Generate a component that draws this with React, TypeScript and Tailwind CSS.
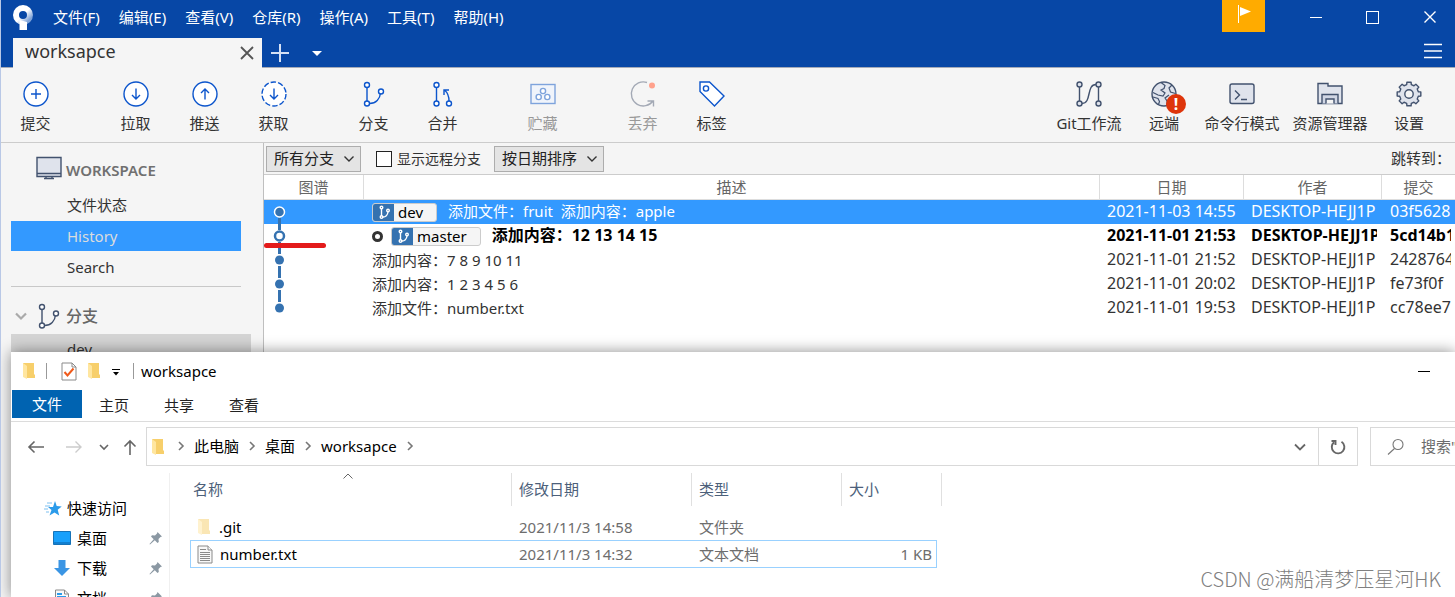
import type { ReactNode } from "react";

const menus = ["文件(F)", "编辑(E)", "查看(V)", "仓库(R)", "操作(A)", "工具(T)", "帮助(H)"];

const commits = [
  { message: "添加文件：fruit  添加内容：apple", branch: "dev", date: "2021-11-03 14:55", hash: "03f5628" },
  { message: "添加内容：12 13 14 15", branch: "master", date: "2021-11-01 21:53", hash: "5cd14b1" },
  { message: "添加内容：7 8 9 10 11", date: "2021-11-01 21:52", hash: "2428764" },
  { message: "添加内容：1 2 3 4 5 6", date: "2021-11-01 20:02", hash: "fe73f0f" },
  { message: "添加文件：number.txt", date: "2021-11-01 19:53", hash: "cc78ee7" },
];

function Icon({ size = 28, className = "", children }: { size?: number; className?: string; children: ReactNode }) {
  return (
    <svg
      width={size}
      height={size}
      viewBox={`0 0 ${size} ${size}`}
      fill="none"
      stroke="currentColor"
      strokeWidth="1.4"
      className={`shrink-0 ${className}`}
      aria-hidden="true"
    >
      {children}
    </svg>
  );
}

function Arrow({ up = false, dashed = false }: { up?: boolean; dashed?: boolean }) {
  return (
    <Icon>
      <circle cx="14" cy="14" r="12" fill="#fff" strokeDasharray={dashed ? "5.5 2.04" : undefined} />
      {up ? <path d="M14 19.5V9M10 13l4-4 4 4" /> : <path d="M14 8.500V19M10 15l4 4 4-4" />}
    </Icon>
  );
}

function BranchIcon({ className = "" }: { className?: string }) {
  return (
    <Icon className={className}>
      <path d="M7 7.500V21M9.500 23.500C16 23.500 20 19 20.500 13" />
      <circle cx="7" cy="5" r="2.500" fill="#fff" />
      <circle cx="7" cy="23.500" r="2.500" fill="#fff" />
      <circle cx="21" cy="11.500" r="2.500" fill="#fff" />
    </Icon>
  );
}

// eight teeth, each one a short outer flat joined to the next by an inner flat
function GearIcon() {
  const points: string[] = [];
  for (let i = 0; i < 8; i++) {
    for (const [offset, r] of [[-14, 9.6], [-10, 12], [10, 12], [14, 9.6]]) {
      const a = ((i * 45 + offset) * Math.PI) / 180;
      points.push(`${(14 + r * Math.sin(a)).toFixed(2)},${(14 - r * Math.cos(a)).toFixed(2)}`);
    }
  }
  return (
    <Icon>
      <polygon points={points.join(" ")} fill="#dfe3ec" strokeLinejoin="round" />
      <circle cx="14" cy="14" r="4.200" fill="#f5f5f5" />
    </Icon>
  );
}

const actions = [
  {
    label: "提交",
    icon: (
      <Icon>
        <circle cx="14" cy="14" r="12" fill="#fff" />
        <path d="M14 9v10M9 14h10" />
      </Icon>
    ),
  },
  { label: "拉取", gap: true, icon: <Arrow /> },
  { label: "推送", icon: <Arrow up /> },
  { label: "获取", icon: <Arrow dashed /> },
  { label: "分支", gap: true, icon: <BranchIcon /> },
  {
    label: "合并",
    icon: (
      <Icon>
        <path d="M7.500 7.500V21M20 21c0-5-1-8-4.500-11M15 15V10h5" />
        <circle cx="7.500" cy="5" r="2.500" fill="#fff" />
        <circle cx="7.500" cy="23.500" r="2.500" fill="#fff" />
        <circle cx="20" cy="23.500" r="2.500" fill="#fff" />
      </Icon>
    ),
  },
  {
    label: "贮藏",
    gap: true,
    disabled: true,
    icon: (
      <Icon className="text-[#7ea3dc]">
        <rect x="2" y="4.500" width="24" height="19" fill="#f0f4fb" />
        <circle cx="14" cy="11" r="2.600" fill="#fff" />
        <circle cx="9.700" cy="17" r="2.600" fill="#fff" />
        <circle cx="18.300" cy="17" r="2.600" fill="#fff" />
      </Icon>
    ),
  },
  {
    label: "丢弃",
    gap: true,
    disabled: true,
    icon: (
      <Icon className="text-[#a3a9b5]">
        <path d="M18 2.500A12 12 0 1 0 24 21M18.500 21H24.500V26.500" />
        <circle cx="23" cy="5.500" r="3" fill="#ffa18c" stroke="none" />
      </Icon>
    ),
  },
  {
    label: "标签",
    icon: (
      <Icon>
        <path d="M2 2h9.500L26 16 16.500 26 2 11.500z" fill="#fff" />
        <circle cx="8" cy="8.500" r="2.600" />
      </Icon>
    ),
  },
];

const tools = [
  {
    label: "Git工作流",
    width: "w-[92px]",
    icon: (
      <Icon>
        <path d="M4.500 7v14M23.500 7v14M7 23.500C17 23.500 11 4.500 21 4.500" />
        <circle cx="4.500" cy="4.500" r="2.500" fill="#dfe3ec" />
        <circle cx="4.500" cy="23.500" r="2.500" fill="#dfe3ec" />
        <circle cx="23.500" cy="4.500" r="2.500" fill="#dfe3ec" />
        <circle cx="23.500" cy="23.500" r="2.500" fill="#dfe3ec" />
      </Icon>
    ),
  },
  {
    label: "远端",
    width: "w-[58px]",
    alert: true,
    icon: (
      <Icon>
        <circle cx="14" cy="14" r="12" fill="#dfe3ec" />
        <path d="M11 2.500l4 3-1 3-3 1.500 4 3-2 3-5-1-5-2.500M3 17l5 1.500 1.500 3-1 3M22 5l-3 3 1.500 4 5 1.500M17 26v-5l-2-3 4-3" strokeWidth="1.200" />
      </Icon>
    ),
  },
  {
    label: "命令行模式",
    width: "w-[98px]",
    icon: (
      <Icon>
        <rect x="2" y="4" width="24" height="19.500" rx="2" fill="#dfe3ec" />
        <path d="M7 10.500l4.500 4.500L7 19.500M13 19.500h6" />
      </Icon>
    ),
  },
  {
    label: "资源管理器",
    width: "w-[78px]",
    icon: (
      <Icon>
        <path d="M2 3.500h10v2.500h14v17.500H2z" fill="#dfe3ec" />
        <path d="M6 23.500V14.500h16v9" fill="#d0d6e4" />
        <path d="M10 23.500V19h8v4.500" fill="#f5f5f5" />
      </Icon>
    ),
  },
  { label: "设置", width: "w-[80px]", icon: <GearIcon /> },
];

function Chevron({ className = "" }: { className?: string }) {
  return (
    <Icon size={12} className={className}>
      <path d="M1.500 3.500L6 8l4.500-4.500" />
    </Icon>
  );
}

function Dropdown({ label, width, options }: { label: string; width: string; options: string[] }) {
  return (
    <div className={`relative ${width}`}>
      <select
        aria-label={label}
        className="w-full h-[26px] pl-[7px] pb-[2px] appearance-none border border-[#adadad] bg-[#e4e4e4] text-[15px] leading-5 text-[#222]"
      >
        {options.map((o) => (
          <option key={o}>{o}</option>
        ))}
      </select>
      <Chevron className="absolute right-[6px] top-[7px] pointer-events-none text-[#333]" />
    </div>
  );
}

function GraphNode({ index }: { index: number }) {
  const last = index === commits.length - 1;
  return (
    <svg width="32" height="24" className="block" aria-hidden="true">
      {index > 0 && <path d="M15.500 0V6" stroke="#3572b0" strokeWidth="3" />}
      {!last && <path d="M15.500 18v6" stroke="#3572b0" strokeWidth="3" />}
      {index === 0 && <circle cx="15.500" cy="12" r="5" fill="#3572b0" stroke="#fff" strokeWidth="1.500" />}
      {index === 1 && <circle cx="15.500" cy="12" r="4.500" fill="#fff" stroke="#3572b0" strokeWidth="2.500" />}
      {index > 1 && <circle cx="15.500" cy="12" r="4.500" fill="#3572b0" />}
    </svg>
  );
}

function BranchBadge({ name }: { name: string }) {
  return (
    <span className="flex h-[19px] shrink-0 items-center overflow-hidden rounded-[3px] border border-[#ccc] bg-[#f5f5f5] pr-[13px] text-[15px] font-normal leading-4 text-black">
      <span className="mr-1 flex h-full w-[21px] items-center justify-center bg-[#3572b0] text-white">
        <Icon size={14}>
          <path d="M4.500 4v7M6 12c3 0 4.500-2 5-5" />
          <circle cx="4.500" cy="2.500" r="1.300" />
          <circle cx="4.500" cy="12" r="1.300" />
          <circle cx="11" cy="5.500" r="1.300" />
        </Icon>
      </span>
      {name}
    </span>
  );
}

function FolderIcon({ className = "" }: { className?: string }) {
  return (
    <svg width="14" height="18" viewBox="0 0 14 18" className={`shrink-0 ${className}`} aria-hidden="true">
      <path d="M1 1h11v11l1 1v3H3z" fill="#f7cf6b" />
      <path d="M1 1l4 3v13l-4-2z" fill="#ffe6a0" />
    </svg>
  );
}

function FileIcon() {
  return (
    <svg width="16" height="19" viewBox="0 0 16 19" fill="#f8f8f8" stroke="#8a8a8a" className="shrink-0" aria-hidden="true">
      <path d="M1 1h10l4 4v13H1z" />
      <path d="M11 1v4h4M3 4.500h6M3 7.500h10M3 9.500h10M3 11.500h10M3 13.500h10M3 15.500h10" />
    </svg>
  );
}

function Crumb() {
  return (
    <Icon size={10} className="text-[#777]">
      <path d="M3 1l4 4-4 4" strokeWidth="1.600" />
    </Icon>
  );
}

function PinIcon() {
  return (
    <svg width="14" height="14" viewBox="0 0 14 14" fill="#8b98a3" className="shrink-0" aria-hidden="true">
      <path d="M8.500 1l4.500 4.500-1.500.5-2 2 .3 3L8.500 12 5.800 9.300 1 13.500.500 13 4.700 8.200 2 5.500l1-1.300 3 .3 2-2z" />
    </svg>
  );
}

function HistoryTable() {
  return (
    <table className="w-full table-fixed border-separate border-spacing-0 bg-white text-base text-[#333]">
      <colgroup>
        <col className="w-[100px]" />
        <col />
        <col className="w-[144px]" />
        <col className="w-[138px]" />
        <col className="w-[73px]" />
      </colgroup>
      <thead>
        <tr className="h-[25px] text-[15px] leading-5 text-[#666]">
          {["图谱", "描述", "日期", "作者", "提交"].map((h) => (
            <th key={h} className="border-b border-r border-[#ddd] p-0 pb-px font-normal last:border-r-0">
              {h}
            </th>
          ))}
        </tr>
      </thead>
      <tbody>
        {commits.map((c, i) => (
          <tr
            key={c.hash}
            className={`h-6 leading-[22px] ${i === 0 ? "bg-[#3399ff] text-white" : ""} ${i === 1 ? "font-bold text-black" : ""}`}
          >
            <td className="relative p-0">
              <GraphNode index={i} />
              {i === 1 && <span className="absolute left-0 top-[19px] h-[5px] w-[62px] rounded-full bg-[#e31b1b]" />}
            </td>
            <td className="p-0 pl-2">
              <div className={`flex h-6 items-center overflow-hidden whitespace-pre ${i === 1 ? "" : "text-[15px]"}`}>
                {i === 1 && <span className="mr-2 h-[11px] w-[11px] rounded-full border-[3px] border-[#333]" />}
                {c.branch && <BranchBadge name={c.branch} />}
                <span className={c.branch ? "ml-[11px] pb-[2px]" : "pb-px"}>{c.message}</span>
              </div>
            </td>
            <td className="p-0 pl-[7px] pr-[6px]">
              <div className="h-6 overflow-hidden whitespace-nowrap">{c.date}</div>
            </td>
            <td className="p-0 pl-[7px] pr-[5px]">
              <div className="h-6 overflow-hidden whitespace-nowrap">DESKTOP-HEJJ1P</div>
            </td>
            <td className="p-0 pl-2 pr-1">
              <div className="h-6 overflow-hidden whitespace-nowrap">{c.hash}</div>
            </td>
          </tr>
        ))}
      </tbody>
    </table>
  );
}

function Explorer() {
  return (
    <section className="absolute bottom-0 left-[10px] right-0 top-[352px] flex flex-col overflow-hidden bg-white text-[15px] text-black shadow-[0_0_14px_rgba(0,0,0,0.45)]">
      <div className="flex h-[38px] shrink-0 items-center pl-[11px]">
        <FolderIcon />
        <span className="ml-[10px] h-4 w-px bg-[#999]" />
        <svg width="16" height="19" viewBox="0 0 16 19" fill="#fff" stroke="#8a8a8a" className="ml-[14px]" aria-hidden="true">
          <path d="M1 1h10l4 4v13H1zM11 1v4h4" />
          <path d="M3.500 10l3 3.500 6-7" fill="none" stroke="#f05a1a" strokeWidth="2" />
        </svg>
        <FolderIcon className="ml-[10px]" />
        <svg width="8" height="8" viewBox="0 0 8 8" className="ml-[11px] mt-[3px]" aria-hidden="true">
          <path d="M0 .5h8" stroke="#000" />
          <path d="M1 3h6L4 6.500z" fill="#000" />
        </svg>
        <span className="ml-[13px] h-4 w-px bg-[#999]" />
        <h2 className="ml-[7px] leading-5">worksapce</h2>
        <button aria-label="最小化" className="ml-auto mr-[25px] flex h-6 w-3 items-center">
          <span className="h-px w-3 bg-black" />
        </button>
      </div>

      <nav className="flex h-[32px] shrink-0 border-b border-[#dcdcdc] pl-px leading-7 text-[#222]">
        <button className="mr-[17px] h-7 w-[70px] bg-[#0063b1] text-white">文件</button>
        <button className="mr-[35px] h-[30px]">主页</button>
        <button className="mr-[35px] h-[30px]">共享</button>
        <button className="h-[30px]">查看</button>
      </nav>

      <div className="mt-[5px] flex h-[39px] shrink-0 items-center">
        <div className="flex w-[135px] shrink-0 items-center pl-[16px] text-[#666]">
          <button aria-label="后退">
            <Icon size={18}>
              <path d="M17 9H2M7.500 3.500L2 9l5.500 5.500" strokeWidth="1.600" />
            </Icon>
          </button>
          <button aria-label="前进" className="ml-[20px] text-[#ccc]">
            <Icon size={18}>
              <path d="M1 9h15M10.500 3.500L16 9l-5.500 5.500" />
            </Icon>
          </button>
          <button aria-label="最近位置" className="ml-[16px]">
            <Icon size={10}>
              <path d="M1 3l4 4 4-4" strokeWidth="1.600" />
            </Icon>
          </button>
          <button aria-label="向上" className="ml-[12px]">
            <Icon size={18}>
              <path d="M9 17V3M3.500 8.500L9 3l5.500 5.500" strokeWidth="1.600" />
            </Icon>
          </button>
        </div>
        <div className="flex h-full flex-1 items-center border border-[#d9d9d9] pl-[4px]">
          <FolderIcon />
          <div className="ml-[11px] flex items-center gap-[8px] pb-[2px] leading-5">
            <Crumb />
            <button>此电脑</button>
            <Crumb />
            <button>桌面</button>
            <Crumb />
            <button>worksapce</button>
            <Crumb />
          </div>
          <button aria-label="展开" className="ml-auto mr-[12px] text-[#666]">
            <Icon size={12}>
              <path d="M1 3.500L6 8.500l5-5" strokeWidth="1.800" />
            </Icon>
          </button>
          <button aria-label="刷新" className="flex h-full w-[39px] items-center justify-center border-l border-[#d9d9d9] text-[#666]">
            <Icon size={18}>
              <path d="M12.500 3.800A6.300 6.300 0 1 1 5 4.300M2.500 3H6.500V7" strokeWidth="1.900" />
            </Icon>
          </button>
        </div>
        <label className="ml-[12px] flex h-full w-[85px] shrink-0 items-center overflow-hidden border border-r-0 border-[#d9d9d9] pl-[16px] text-[#777]">
          <Icon size={18}>
            <circle cx="11" cy="6.500" r="5" strokeWidth="1.100" />
            <path d="M7.500 10.500L1 16.500" strokeWidth="1.100" />
          </Icon>
          <input
            type="text"
            aria-label="搜索"
            placeholder={'搜索"worksapce"'}
            className="ml-[16px] w-[130px] shrink-0 outline-none placeholder:text-[#6d6d6d]"
          />
        </label>
      </div>

      <div className="flex min-h-0 flex-1 pt-[7px]">
        <aside className="w-[159px] shrink-0 border-r border-[#f0f0f0] pt-[20px]">
          <ul className="leading-[30px]">
            <li className="flex h-[30px] items-center pl-[33px]">
              <svg width="18" height="17" viewBox="0 0 18 17" className="mr-[5px]" aria-hidden="true">
                <path d="M11 1l1.700 5 5 .500-4 3.300 1.500 5.700-4.700-3-5 3 2-5.500-3.500-3 5 0z" fill="#2b9bea" />
                <path d="M3 3h5M1 6h5M0 9h4M2 12h3" stroke="#7cc0f0" />
              </svg>
              快速访问
            </li>
            <li className="flex h-[30px] items-center pl-[42px] pr-[6px]">
              <svg width="18" height="14" viewBox="0 0 18 14" className="mr-[6px]" aria-hidden="true">
                <path d="M.5.5h17v13H.5z" fill="#18a0fb" stroke="#1673b8" />
                <path d="M1 12h16" stroke="#0b5fa5" />
              </svg>
              桌面
              <span className="ml-auto">
                <PinIcon />
              </span>
            </li>
            <li className="flex h-[30px] items-center pl-[42px] pr-[6px]">
              <svg width="18" height="18" viewBox="0 0 18 18" className="mr-[6px]" aria-hidden="true">
                <path d="M5.500 1h7v8H17l-8 8-8-8h4.500z" fill="#3a95e4" />
              </svg>
              下载
              <span className="ml-auto">
                <PinIcon />
              </span>
            </li>
            <li className="flex h-[30px] items-center pl-[42px] pr-[6px]">
              <svg width="18" height="19" viewBox="0 0 18 19" className="mr-[6px]" aria-hidden="true">
                <path d="M2.500 1h9l4 4v13h-13zM11.500 1v4h4" fill="#f8f8f8" stroke="#8a8a8a" />
                <path d="M4 5h5M4 8h9M4 11h9" stroke="#2b9bea" strokeWidth="2" />
              </svg>
              文档
              <span className="ml-auto">
                <PinIcon />
              </span>
            </li>
          </ul>
        </aside>

        <div className="relative ml-[20px]">
          <Icon size={12} className="absolute left-[152px] top-[-2px] text-[#666]">
            <path d="M1.500 7.500L6 3l4.500 4.500" strokeWidth="1" />
          </Icon>
          <table className="w-[752px] table-fixed border-separate border-spacing-0 text-left leading-5 text-[#666]">
            <colgroup>
              <col className="w-[322px]" />
              <col className="w-[180px]" />
              <col className="w-[150px]" />
              <col className="w-[100px]" />
            </colgroup>
            <thead>
              <tr className="h-[33px] text-[#4c607a]">
                <th className="border-r border-[#e0e0e0] p-0 pb-[2px] pl-[3px] font-normal">名称</th>
                <th className="border-r border-[#e0e0e0] p-0 pb-[2px] pl-[7px] font-normal">修改日期</th>
                <th className="border-r border-[#e0e0e0] p-0 pb-[2px] pl-[7px] font-normal">类型</th>
                <th className="border-r border-[#e0e0e0] p-0 pb-[2px] pl-[7px] font-normal">大小</th>
              </tr>
            </thead>
          </table>
          <table className="mt-[8px] w-[747px] table-fixed border-separate border-spacing-0 text-left leading-5 text-[#6d6d6d]">
            <colgroup>
              <col className="w-[322px]" />
              <col className="w-[180px]" />
              <col className="w-[150px]" />
              <col className="w-[95px]" />
            </colgroup>
            <tbody>
              <tr className="h-[26px]">
                <td className="p-0 pl-[7px] text-black">
                  <div className="flex items-center gap-[8px]">
                    <FolderIcon className="opacity-50" />
                    .git
                  </div>
                </td>
                <td className="p-0 pl-[7px]">2021/11/3 14:58</td>
                <td className="p-0 pl-[7px]">文件夹</td>
                <td className="p-0" />
              </tr>
              <tr className="h-[28px]">
                <td className="border-y border-l border-[#99d1ff] p-0 pl-[6px] text-black">
                  <div className="flex items-center gap-[7px]">
                    <FileIcon />
                    number.txt
                  </div>
                </td>
                <td className="border-y border-[#99d1ff] p-0 pl-[7px]">2021/11/3 14:32</td>
                <td className="border-y border-[#99d1ff] p-0 pl-[7px]">文本文档</td>
                <td className="border-y border-r border-[#99d1ff] p-0 pr-[4px] text-right">1 KB</td>
              </tr>
            </tbody>
          </table>
        </div>
      </div>
    </section>
  );
}

export default function App() {
  return (
    <div className="relative flex h-screen flex-col overflow-hidden border-l border-[#b9c8e6] bg-[#f5f5f5] font-['Noto_Sans','Noto_Sans_CJK_SC',sans-serif] text-[15px] text-[#333]">
      <header className="shrink-0 border-b border-[#a5abb8] bg-[#0747a6] text-white">
        <div className="flex h-[38px] items-start">
          <svg width="22" height="26" viewBox="0 0 22 26" className="ml-[11px] mt-[5px]" aria-hidden="true">
            <defs>
              <linearGradient id="logoFade" x1="0.5" y1="0.5" x2="0.9" y2="0.9">
                <stop offset="0" stopColor="#fff" />
                <stop offset="1" stopColor="#7fa3d8" />
              </linearGradient>
            </defs>
            <circle cx="11" cy="10" r="7" fill="none" stroke="url(#logoFade)" strokeWidth="6" />
            <path d="M7.500 15l7.500 2v8H7.500z" fill="#fff" />
          </svg>
          <nav className="ml-[19px] flex h-[34px] items-center gap-[19px] leading-5">
            {menus.map((m) => (
              <button key={m}>{m}</button>
            ))}
          </nav>
          <div className="ml-auto flex h-8 items-center">
            <button aria-label="通知" className="mr-[44px] flex h-8 w-[43px] items-start justify-center bg-[#ffab00] pt-1">
              <svg width="16" height="20" viewBox="0 0 16 20" aria-hidden="true">
                <path d="M2.500 1v18" stroke="#fff" />
                <path d="M4 3l11 4.500L4 12z" fill="#fff" />
              </svg>
            </button>
            <button aria-label="最小化" className="mr-[43px] h-[14px] w-[14px] pt-[2px]">
              <span className="mx-auto block h-px w-3 bg-white" />
            </button>
            <button aria-label="最大化" className="mr-[44px] mt-[2px] h-[13px] w-[13px] border border-white" />
            <button aria-label="关闭" className="mr-[18px] mt-[2px]">
              <Icon size={14}>
                <path d="M1.500 1.500l11 11M12.500 1.500l-11 11" />
              </Icon>
            </button>
          </div>
        </div>
        <div className="flex h-[29px] items-center">
          <div className="-mb-px ml-3 flex h-[30px] w-[249px] items-center justify-between bg-[#f5f5f5] pl-[12px] pr-[8px] text-lg leading-6 text-[#333]">
            <span className="pb-[4px]">worksapce</span>
            <button aria-label="关闭标签页" className="text-[#555]">
              <Icon size={14}>
                <path d="M1 1l12 12M13 1L1 13" strokeWidth="1.800" />
              </Icon>
            </button>
          </div>
          <button aria-label="新建标签页" className="ml-[8px] text-[#d5e1f5]">
            <Icon size={20}>
              <path d="M10 1v18M1 10h18" strokeWidth="2" />
            </Icon>
          </button>
          <button aria-label="标签页列表" className="ml-[22px] mt-[3px]">
            <svg width="10" height="6" viewBox="0 0 10 6" aria-hidden="true">
              <path d="M0 0h10L5 5z" fill="#fff" />
            </svg>
          </button>
          <button aria-label="菜单" className="mb-[4px] ml-auto mr-[13px]">
            <Icon size={18}>
              <path d="M0 2.500h18M0 9h18M0 15.500h18" strokeWidth="1.600" />
            </Icon>
          </button>
        </div>
      </header>

      <div className="flex h-[75px] shrink-0 border-b border-[#ccc] leading-5">
        {actions.map((a) => (
          <button
            key={a.label}
            disabled={a.disabled}
            className={`flex w-[69px] shrink-0 flex-col items-center pt-[12px] ${a.gap ? "ml-[31px]" : ""} ${a.disabled ? "text-[#999]" : ""}`}
          >
            <span className="text-[#0c55cc]">{a.icon}</span>
            <span className="mt-[5px]">{a.label}</span>
          </button>
        ))}
        <div className="ml-auto mr-[6px] flex">
          {tools.map((t) => (
            <button key={t.label} className={`flex shrink-0 flex-col items-center whitespace-nowrap pt-[12px] ${t.width}`}>
              <span className="relative text-[#42526e]">
                {t.icon}
                {t.alert && (
                  <span className="absolute left-[16px] top-[14px] flex h-5 w-5 items-center justify-center rounded-full bg-[#de350b] text-base font-bold text-white">
                    !
                  </span>
                )}
              </span>
              <span className="mt-[5px]">{t.label}</span>
            </button>
          ))}
        </div>
      </div>

      <div className="flex min-h-0 flex-1">
        <aside className="w-[263px] shrink-0 border-r border-[#bfbfbf] pl-[10px]">
          <div className="flex h-[47px] items-center pl-[25px] pt-[6px] font-semibold leading-6 text-[#707070]">
            <Icon size={26} className="mb-[3px] mr-[4px] text-[#42526e]">
              <path d="M1 2.500h24v19H1z" fill="#dfe3ec" />
              <path d="M1 18.500h24M10 21.500v2M16 21.500v2M8 23.500h10" />
            </Icon>
            WORKSPACE
          </div>
          <ul className="mr-[22px] border-b border-[#c8c8c8] pb-[3px] leading-[30px]">
            <li className="h-[31px] pl-[56px]">文件状态</li>
            <li className="mb-px h-[30px] bg-[#3399ff] pl-[56px] text-[#dcdcdc]">History</li>
            <li className="h-[31px] pl-[56px]">Search</li>
          </ul>
          <div className="flex h-[47px] items-center pt-[11px] text-base font-medium leading-6 text-[#666]">
            <Icon size={12} className="ml-[4px] text-[#aaa]">
              <path d="M1 3.500l5 5 5-5" strokeWidth="2.200" />
            </Icon>
            <BranchIcon className="ml-[8px] mr-[3px] text-[#42526e]" />
            分支
          </div>
          <div className="mr-[12px] h-[31px] bg-[#d4d4d4] pl-[56px] leading-[30px]">dev</div>
        </aside>

        <main className="min-w-0 flex-1 bg-white">
          <div className="flex h-[32px] items-center border-b border-[#ccc] bg-[#f5f5f5] pl-[2px]">
            <Dropdown label="分支范围" width="w-[95px]" options={["所有分支", "当前分支"]} />
            <label className="ml-[15px] flex items-center text-sm leading-5">
              <input type="checkbox" className="mr-[5px] h-4 w-4 appearance-none border border-[#222] bg-white" />
              显示远程分支
            </label>
            <div className="ml-[13px]">
              <Dropdown label="排序方式" width="w-[110px]" options={["按日期排序", "按祖先排序"]} />
            </div>
            <span className="ml-auto mr-[4px] pb-px">跳转到：</span>
          </div>
          <HistoryTable />
        </main>
      </div>

      <Explorer />

      <p className="absolute bottom-[4px] right-[14px] text-xl leading-7 font-['Noto_Sans_CJK_SC',sans-serif] font-light text-[#808080]">
        CSDN @满船清梦压星河HK
      </p>
    </div>
  );
}
